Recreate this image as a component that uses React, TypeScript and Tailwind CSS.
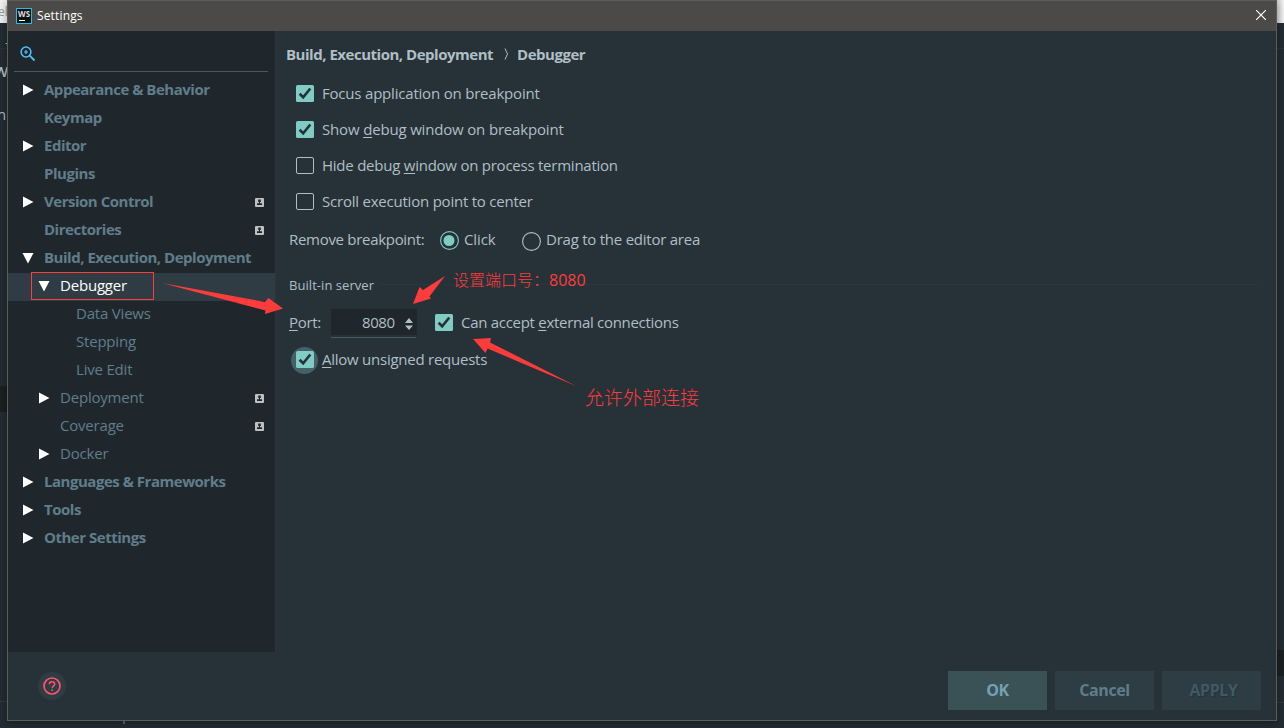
import React from "react";

type Item = {
  label: string;
  level: number;
  arrow?: "right" | "down";
  badge?: boolean;
  selected?: boolean;
};

const items: Item[] = [
  { label: "Appearance & Behavior", level: 0, arrow: "right" },
  { label: "Keymap", level: 0 },
  { label: "Editor", level: 0, arrow: "right" },
  { label: "Plugins", level: 0 },
  { label: "Version Control", level: 0, arrow: "right", badge: true },
  { label: "Directories", level: 0, badge: true },
  { label: "Build, Execution, Deployment", level: 0, arrow: "down" },
  { label: "Debugger", level: 1, arrow: "down", selected: true },
  { label: "Data Views", level: 2 },
  { label: "Stepping", level: 2 },
  { label: "Live Edit", level: 2 },
  { label: "Deployment", level: 1, arrow: "right", badge: true },
  { label: "Coverage", level: 1, badge: true },
  { label: "Docker", level: 1, arrow: "right" },
  { label: "Languages & Frameworks", level: 0, arrow: "right" },
  { label: "Tools", level: 0, arrow: "right" },
  { label: "Other Settings", level: 0, arrow: "right" },
];

const indents = ["pl-[14px]", "pl-[30px]", "pl-[46px]"];

function Arrow({ dir }: { dir?: "right" | "down" }) {
  return (
    <svg width="12" height="12" viewBox="0 0 12 12" fill="#fff" className="mb-[2px] shrink-0">
      {dir === "right" && <path d="M1 .5V11.5L11.5 6Z" />}
      {dir === "down" && <path d="M.5 1H11.5L6 11.5Z" />}
    </svg>
  );
}

function ProjectBadge() {
  return (
    <svg width="9" height="9" viewBox="0 0 9 9" className="mb-px ml-auto mr-[11px] shrink-0">
      <rect width="9" height="9" rx="1" fill="#bcc0c1" />
      <path d="M3.200 1.500h2.600v2.600H5v1.100h2V7H2V5.200h2V4.100h-.8Z" fill="#1f272c" />
    </svg>
  );
}

function TreeRow({ item }: { item: Item }) {
  return (
    <div
      className={`flex h-7 items-center ${indents[item.level]} ${item.selected ? "bg-[#2f3c44]" : ""}`}
    >
      <Arrow dir={item.arrow} />
      <span
        className={`ml-[10px] whitespace-nowrap pb-1 text-[15px] leading-6 ${
          item.selected ? "text-white" : "text-[#607d8b]"
        } ${item.level === 0 ? "font-bold tracking-[-0.48px]" : "tracking-[-0.2px]"}`}
      >
        {item.label}
      </span>
      {item.badge && <ProjectBadge />}
    </div>
  );
}

function CheckBox({ checked }: { checked?: boolean }) {
  return (
    <svg width="18" height="18" viewBox="0 0 18 18" className="shrink-0">
      {checked ? (
        <>
          <rect width="18" height="17" rx="1.500" fill="#80cbc4" />
          <path d="M3.600 8.800 7.200 12.300 14.300 3.500" fill="none" stroke="#263238" strokeWidth="2.600" />
        </>
      ) : (
        <rect x=".5" y=".5" width="17" height="16" rx="1.500" fill="none" stroke="#b0bec5" />
      )}
    </svg>
  );
}

function U({ children }: { children: React.ReactNode }) {
  return <span className="underline decoration-1 underline-offset-2">{children}</span>;
}

export default function App() {
  return (
    <div className="relative h-[728px] w-[1284px] overflow-hidden bg-[#222c32] font-['Open_Sans','Noto_Sans','Noto_Sans_CJK_SC',sans-serif] text-[15px] text-[#b0bec5]">
      <div className="flex h-full justify-between">
        <div className="flex w-[7px] flex-col">
          <div className="h-[23px] bg-[#efefef] text-[12px] leading-6 text-[#999]">
            <span className="-ml-[2px]">el</span>
          </div>
          <div className="h-[26px] border-b border-[#29343a] pl-[5px] leading-[38px]">-</div>
          <div className="mt-[10px] h-6 text-[15px] font-semibold leading-6">
            <span className="-ml-[6px]">W</span>
          </div>
          <div className="mt-[19px] h-6 leading-6">
            <span className="-ml-[3px]">n</span>
          </div>
          <div className="mt-[260px] h-[26px] bg-[#1a2123]" />
          <div className="mt-[289px] h-px bg-[#35393b]" />
        </div>
        <div className="flex w-[7px] flex-col">
          <div className="h-[23px] bg-gradient-to-r from-[#cfcfcf] to-[#f5f5f5]" />
          <div className="h-[26px] border-b border-[#29343a]" />
          <div className="mt-[601px] h-[26px] bg-[#1a2123]" />
          <div className="mt-[26px] h-px bg-[#35393b]" />
        </div>
      </div>
      <div className="absolute left-[123px] top-[721px] h-[3px] w-[2px] bg-[#596b7d]" />

      <div className="absolute left-[7px] top-0 flex h-[721px] w-[1270px] flex-col border border-[#5f5d5a] bg-[#263238] shadow-[0_2px_8px_rgba(0,0,0,0.35)]">
        <header className="flex h-[30px] shrink-0 items-center bg-[#4c4a48] pl-2 pr-[10px]">
          <svg width="16" height="16" viewBox="0 0 16 16" className="mb-px shrink-0">
            <rect x=".5" y=".5" width="15" height="15" fill="#101010" stroke="#15c3ea" />
            <text x="2" y="8.500" fontSize="8" fontWeight="700" fill="#ddd" textLength="12" lengthAdjust="spacingAndGlyphs">WS</text>
            <rect x="3" y="12" width="6" height="1" fill="#fff" />
          </svg>
          <span className="ml-[5px] text-[12px] tracking-[0.15px] text-white">Settings</span>
          <svg width="10" height="10" viewBox="0 0 10 10" className="mb-[2px] ml-auto" fill="none" stroke="#fff" strokeWidth="1.200">
            <path d="M0 0 10 10M10 0 0 10" />
          </svg>
        </header>

        <div className="flex h-[621px] shrink-0">
          <aside className="w-[268px] shrink-0 border-r border-[#2a363c] bg-[#1f272c]">
            <div className="ml-[6px] flex h-[41px] w-[254px] items-center border-b border-[#465a65] pl-[6px] pt-[5px]">
              <svg width="16" height="16" viewBox="0 0 16 16" fill="none" stroke="#4fc3f7" strokeWidth="1.500">
                <circle cx="6" cy="6" r="4.900" />
                <path d="M9.700 9.700 14.500 14.500" strokeWidth="1.800" />
                <path d="M6 4v4M4 6h4" strokeWidth="1.200" />
              </svg>
            </div>
            <nav className="pt-[5px]">
              {items.map((item) => (
                <TreeRow key={item.label} item={item} />
              ))}
            </nav>
          </aside>

          <main className="flex-1">
            <div className="flex h-12 items-center pb-[2px] pl-[10px] font-bold">
              <span className="tracking-[-0.48px]">Build, Execution, Deployment</span>
              <svg width="5" height="12" viewBox="0 0 5 12" className="ml-[11px] mr-2" fill="none" stroke="#b0bec5">
                <path d="M1 .5 3.500 6 1 11.500" />
              </svg>
              <span className="tracking-[-0.48px]">Debugger</span>
            </div>
            <div className="-mt-[3px] flex flex-col pl-5">
              <label className="flex h-9 items-center gap-2">
                <CheckBox checked />
                <span className="whitespace-pre pb-[2px] tracking-[-0.2px]">Focus application on breakpoint</span>
              </label>
              <label className="flex h-9 items-center gap-2">
                <CheckBox checked />
                <span className="whitespace-pre pb-[2px] tracking-[-0.17px]">Show <U>d</U>ebug window on breakpoint</span>
              </label>
              <label className="flex h-9 items-center gap-2">
                <CheckBox />
                <span className="whitespace-pre pb-[2px] tracking-[-0.24px]">Hide debug <U>w</U>indow on process termination</span>
              </label>
              <label className="flex h-9 items-center gap-2">
                <CheckBox />
                <span className="whitespace-pre pb-[2px] tracking-[-0.22px]">Scroll execution point to center</span>
              </label>
            </div>
            <div className="flex h-10 items-center pl-[13px]">
              <span className="w-[151px] whitespace-nowrap pb-[2px] tracking-[-0.3px]">Remove breakpoint:</span>
              <svg width="19" height="19" viewBox="0 0 19 19">
                <circle cx="9.500" cy="9.500" r="8.900" fill="none" stroke="#80cbc4" strokeWidth="1.100" />
                <circle cx="9" cy="9.500" r="5.500" fill="#80cbc4" />
              </svg>
              <span className="ml-[5px] w-[58px] pb-[2px] tracking-[-0.1px]">Click</span>
              <svg width="19" height="19" viewBox="0 0 19 19" className="mt-[2px]">
                <circle cx="9.500" cy="9.500" r="8.900" fill="none" stroke="#b0bec5" strokeWidth="1.100" />
              </svg>
              <span className="ml-[5px] whitespace-nowrap pb-[2px] tracking-[-0.24px]">Drag to the editor area</span>
            </div>
            <div className="mt-[13px] flex h-6 items-center pl-[13px] pr-[18px]">
              <span className="whitespace-nowrap pt-[2px] text-[13px] tracking-[0.05px]">Built-in server</span>
              <span className="mb-[2px] ml-[6px] h-px flex-1 bg-[#29383f]" />
            </div>
            <div className="mt-3 flex h-[30px] items-start pl-[13px]">
              <span className="w-[42px] pt-[2px] leading-[22px] tracking-[-0.3px]"><U>P</U>ort:</span>
              <div className="flex h-[30px] w-[86px] flex-col">
                <div className="flex h-[26px] items-center bg-[#1f272c] pl-[31px]">
                  <span className="w-[43px] tracking-[-0.4px]">8080</span>
                  <svg width="8" height="12" viewBox="0 0 8 12" fill="#b0bec5" className="mt-1">
                    <path d="M0 5 4 0 8 5ZM0 7.500 4 12 8 7.500Z" />
                  </svg>
                </div>
                <div className="mt-[2px] h-px w-[85px] bg-[#465a65]" />
              </div>
              <label className="ml-[18px] flex h-7 items-center gap-2">
                <CheckBox checked />
                <span className="whitespace-pre pb-[2px] tracking-[-0.29px]">Can accept <U>e</U>xternal connections</span>
              </label>
            </div>
            <label className="mt-[7px] flex h-[28px] items-center pl-[15px]">
              <span className="flex h-[27px] w-[27px] items-center justify-center rounded-full bg-[#436166]">
                <CheckBox checked />
              </span>
              <span className="ml-1 whitespace-pre pb-[2px] tracking-[-0.25px]"><U>A</U>llow unsigned requests</span>
            </label>
          </main>
        </div>

        <footer className="flex flex-1 items-center pl-[30px] pr-[15px]">
          <span className="-mt-px flex h-[28px] w-[28px] items-center justify-center rounded-full bg-[#2e3c43]">
            <svg width="18" height="18" viewBox="0 0 18 18" fill="none" stroke="#ff5370" strokeWidth="1.700">
              <circle cx="9" cy="9" r="8" />
              <path d="M6.300 7.200Q6.300 4.700 9 4.700T11.700 7.200C11.700 8.900 9.200 9 9.200 11.200" strokeWidth="1.500" />
              <path d="M8.400 13.200h1.600" strokeWidth="1.600" />
            </svg>
          </span>
          <div className="ml-auto mt-[8px] flex gap-2 text-[16px] font-bold tracking-[-0.4px]">
            <button className="h-[39px] w-[99px] bg-[#3a5256] text-[#75a0b5]">OK</button>
            <button className="h-[39px] w-[99px] bg-[#2e3c43] text-[#607d8b]">Cancel</button>
            <button className="h-[39px] w-[99px] bg-[#2e3c43] pl-[4px] text-[#415967] [text-shadow:1px_1px_0_#263238]">APPLY</button>
          </div>
        </footer>
      </div>

      <div className="absolute left-[31px] top-[272px] h-7 w-[123px] border border-[#ff3b3b]" />
      <svg width="1284" height="728" viewBox="0 0 1284 728" className="pointer-events-none absolute left-0 top-0" fill="#ff3b3b">
        <path d="M162 283 265 302 268.500 298 283 308.500 265 314 265.500 310.500Z" />
        <path d="M445 276 429.500 296.500 431 298.500 413 304 419.500 287 423 290Z" />
        <path d="M576 386 487.500 348.500 485.500 353 473 339 491 338 490 342.500Z" />
      </svg>
      <div className="absolute left-[453px] top-[268px] whitespace-nowrap text-[16px] font-light leading-6 text-[#ff3b3b]">
        设置端口号：<span className="font-normal">8080</span>
      </div>
      <div className="absolute left-[585px] top-[386px] whitespace-nowrap text-[19px] font-light leading-6 text-[#ff3b3b]">
        允许外部连接
      </div>
    </div>
  );
}
